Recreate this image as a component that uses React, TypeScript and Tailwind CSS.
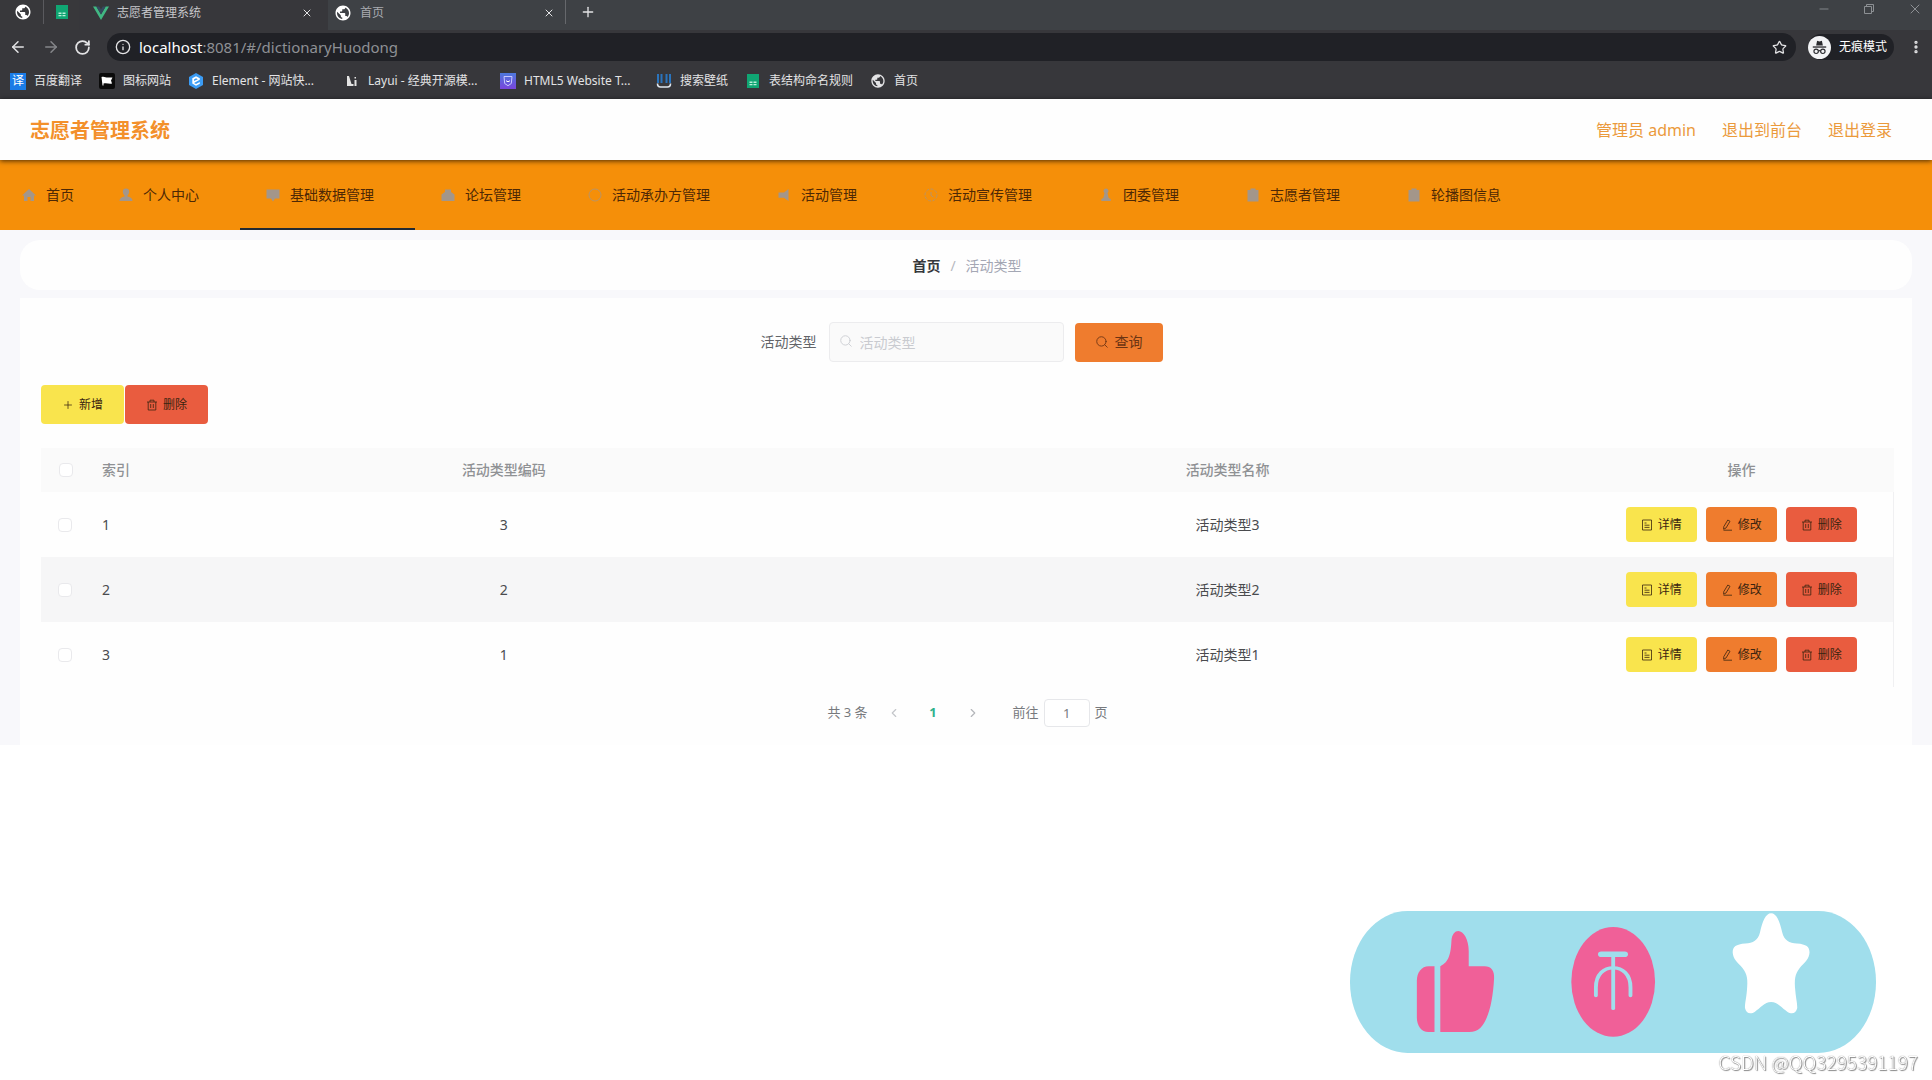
import React from "react";
import {
  ArrowLeft,
  ArrowRight,
  ChevronLeft,
  ChevronRight,
  Copy,
  Info,
  Minus,
  MoreVertical,
  Plus,
  RotateCw,
  Search,
  Star,
  X,
} from "lucide-react";
import { MdPublic } from "react-icons/md";

type Tone = "yellow" | "orange" | "red";

const toneClass: Record<Tone, string> = {
  yellow: "bg-[#f9e44d]",
  orange: "bg-[#ef7c2e]",
  red: "bg-[#e95c3f]",
};

/* ---------- small drawings ---------- */

function SheetIcon() {
  return (
    <svg className="size-4" viewBox="0 0 16 16" aria-hidden="true">
      <path d="M2 1h12v14H2z" fill="#10a673" />
      <path d="M4.5 8.5h3v1.5h-3zM8.5 8.5h3v1.5h-3zM4.5 11h3v1.2h-3zM8.5 11h3v1.2h-3z" fill="#b9efd9" />
    </svg>
  );
}

function VueIcon() {
  return (
    <svg className="size-4" viewBox="0 0 16 16" aria-hidden="true">
      <path d="M0 1.5h3.3L8 9.6l4.700-8.100H16L8 15z" fill="#41b883" />
      <path d="M3.300 1.500h2.900L8 4.600l1.800-3.100h2.900L8 9.600z" fill="#35495e" />
    </svg>
  );
}

function TranslateIcon() {
  return (
    <span className="flex size-[17px] items-center justify-center bg-[#1b7ce6] text-xs leading-none text-white" aria-hidden="true">
      译
    </span>
  );
}

function FlagIcon() {
  return (
    <svg className="size-4" viewBox="0 0 16 16" aria-hidden="true">
      <rect width="16" height="16" rx="2" fill="#0b0b0b" />
      <path d="M2.500 4c3-1 4.500 1 7 .5l4 0-1.500 3 1 3c-3 .8-5-1-8.500 0V12.500H3.500z" fill="#fff" />
    </svg>
  );
}

function ElementIcon() {
  return (
    <svg className="size-4" viewBox="0 0 16 16" aria-hidden="true">
      <path d="M8 0l7 4v8l-7 4-7-4V4z" fill="#3b9cf5" />
      <path d="M11.800 5.200L8 3.200 4.300 5.300v5.300L8 12.700l3.800-2v-1.800L8 11 6 9.900l5.800-3.200zM6 8.100V6.500L8 5.300l1.800 1z" fill="#fff" />
    </svg>
  );
}

function LayuiIcon() {
  return (
    <svg className="size-4" viewBox="0 0 16 16" fill="#e4e4e4" aria-hidden="true">
      <path d="M3 3h2l2.500 8h2v2H3zM10.500 7h2v6h-2zM10.500 4h1.500v1.500h-1.500z" />
    </svg>
  );
}

function HtmlIcon() {
  return (
    <svg className="size-4" viewBox="0 0 16 16" aria-hidden="true">
      <defs>
        <linearGradient id="html-badge" x1="0" y1="0" x2="0" y2="1">
          <stop offset="0" stopColor="#4d78dc" />
          <stop offset="1" stopColor="#7a45dd" />
        </linearGradient>
      </defs>
      <rect width="16" height="16" fill="url(#html-badge)" />
      <path d="M4 3.500h8l-.7 7L8 12.700l-3.300-2.200z" fill="none" stroke="#c9c9ff" />
      <path d="M6 7.500c1 1.500 3 1.500 4 0" fill="none" stroke="#fff" />
    </svg>
  );
}

function WallpaperIcon() {
  return (
    <svg className="size-4" viewBox="0 0 16 16" fill="none" aria-hidden="true">
      <path d="M2 1v9M5.500 1v9M10.500 1v9M14 1v9" stroke="#2a74bd" strokeWidth="2" />
      <path d="M1.500 10.500c0 2 1 3.500 3 3.500h7c2 0 3-1.500 3-3.500" stroke="#dfe7ef" strokeWidth="1.600" />
    </svg>
  );
}

function IncognitoIcon() {
  return (
    <svg className="size-[23px]" viewBox="0 0 24 24" fill="none" aria-hidden="true">
      <circle cx="12" cy="12" r="12" fill="#f2f3f5" />
      <path d="M8.500 10l1-5 2.500.8 2.500-.8 1 5z" fill="#2a2b2f" />
      <path d="M5 11.500h14" stroke="#2a2b2f" strokeWidth="1.400" />
      <circle cx="8.500" cy="16" r="2.300" stroke="#2a2b2f" strokeWidth="1.200" />
      <circle cx="15.500" cy="16" r="2.300" stroke="#2a2b2f" strokeWidth="1.200" />
      <path d="M10.800 15.600c.8-.4 1.600-.4 2.400 0" stroke="#2a2b2f" strokeWidth="1.200" />
    </svg>
  );
}

function RestoreIcon() {
  return (
    <svg className="size-3" viewBox="0 0 12 12" fill="none" stroke="currentColor" aria-hidden="true">
      <path d="M1.500 3.500h7v7h-7zM3.500 3.500v-2h7v7h-2" />
    </svg>
  );
}

function TrashIcon() {
  return (
    <svg className="size-3" viewBox="0 0 12 12" fill="none" stroke="currentColor" strokeWidth="0.800" aria-hidden="true">
      <path d="M1 3h10M4 3V1.200h4V3M2.200 3v8h7.600V3M4.700 5v4M7.300 5v4" />
    </svg>
  );
}

function DocIcon() {
  return (
    <svg className="size-3" viewBox="0 0 12 12" fill="none" stroke="currentColor" strokeWidth="0.800" aria-hidden="true">
      <path d="M1.500 1h9v10h-9zM3.500 4h2M3.500 6.200h5M3.500 8.400h5" />
    </svg>
  );
}

function EditIcon() {
  return (
    <svg className="size-3" viewBox="0 0 12 12" fill="none" stroke="currentColor" strokeWidth="0.800" aria-hidden="true">
      <path d="M6.800 1l2.200 1.300-4 6.700-2.400 1.200.2-2.600zM2.500 11.200h8.500" />
    </svg>
  );
}

const navShapes = {
  home: <path d="M8 2l7 6.500h-2V14H9.500v-4h-3v4H3V8.500H1z" />,
  user: <path d="M8 1.500a3.200 3.200 0 013.200 3.200c0 1.500-.7 2.900-1.700 3.700v1.200c3 .6 5 1.700 5 4.400h-13c0-2.700 2-3.800 5-4.400V8.400c-1-.8-1.700-2.200-1.700-3.700A3.200 3.200 0 018 1.500z" />,
  message: <path d="M1.500 2.500h13v9H10l-2 3-2-3H1.500z" />,
  shop: <path d="M5 2.500h6v2.500l3.500 2.500V14h-13V7.500L5 5z" />,
  ring: <circle cx="8" cy="8" r="6" fill="none" stroke="currentColor" strokeWidth="1" opacity="0.700" />,
  horn: <path d="M12.500 2v12L8 10.800H2.500V5.500H8z" />,
  clock: (
    <g fill="none" stroke="currentColor" strokeWidth="1" opacity="0.700">
      <circle cx="8" cy="8" r="6" strokeDasharray="3 1.500" />
      <path d="M8 5v3.500l2.500 1.500" />
    </g>
  ),
  pawn: <path d="M8 1.500a2.500 2.500 0 011.500 4.500l1.200 5 2 1v2H3.300v-2l2-1 1.200-5A2.500 2.500 0 018 1.500z" />,
  clip: <path d="M5.500 1.500h5v1.500h3v11.500h-11V3h3z" />,
};

type NavKey = keyof typeof navShapes;

function NavIcon({ name }: { name: NavKey }) {
  return (
    <svg className="size-4 shrink-0 text-[#a3968a]" viewBox="0 0 16 16" fill="currentColor" aria-hidden="true">
      {navShapes[name]}
    </svg>
  );
}

/* ---------- browser window ---------- */

const bookmarks: { label: string; icon: React.ReactNode; wide?: boolean }[] = [
  { label: "百度翻译", icon: <TranslateIcon /> },
  { label: "图标网站", icon: <FlagIcon /> },
  { label: "Element - 网站快...", icon: <ElementIcon />, wide: true },
  { label: "Layui - 经典开源模...", icon: <LayuiIcon />, wide: true },
  { label: "HTML5 Website T...", icon: <HtmlIcon />, wide: true },
  { label: "搜索壁纸", icon: <WallpaperIcon /> },
  { label: "表结构命名规则", icon: <SheetIcon /> },
  { label: "首页", icon: <MdPublic className="size-[18px]" /> },
];

function BrowserChrome() {
  return (
    <div className="bg-[#37373b] text-[#e3e3e5]">
      <div className="flex h-[30px] items-start bg-[#3e4145] text-xs">
        <div className="flex h-full items-start bg-[#38383b]">
          <button aria-label="固定的标签页" className="flex h-6 w-[43px] items-center justify-center pl-[2px]">
            <MdPublic className="size-[18px] text-white" />
          </button>
          <span className="h-6 w-px bg-[#5a5a5e]" />
          <button aria-label="表格" className="flex h-6 w-[35px] items-center justify-center">
            <SheetIcon />
          </button>
        </div>
        <div className="flex h-full w-[249px] items-start bg-[#37373b] pl-[14px] pr-[15px]">
          <div className="flex h-[26px] flex-1 items-center gap-2">
            <VueIcon />
            <span className="flex-1 text-[#c6c6ca]">志愿者管理系统</span>
            <button aria-label="关闭标签页">
              <X className="size-3" />
            </button>
          </div>
        </div>
        <div className="flex h-[26px] w-[237px] items-center gap-2 pl-[6px] pr-[10px]">
          <MdPublic className="size-[18px] text-white" />
          <span className="flex-1 text-[#a9abb0]">首页</span>
          <button aria-label="关闭标签页">
            <X className="size-3" />
          </button>
        </div>
        <span className="h-6 w-px bg-[#66686c]" />
        <button aria-label="新建标签页" className="flex h-6 w-[43px] items-center justify-center">
          <Plus className="size-4" />
        </button>
        <div className="ml-auto flex h-[18px] items-center gap-8 pr-[9px] text-[#8d9094]">
          <button aria-label="最小化"><Minus className="size-[14px]" strokeWidth={1.5} /></button>
          <button aria-label="还原"><RestoreIcon /></button>
          <button aria-label="关闭"><X className="size-4" strokeWidth={1.5} /></button>
        </div>
      </div>

      <div className="flex h-[34px] items-center pl-[9px] pr-2">
        <button aria-label="后退"><ArrowLeft className="size-[18px]" /></button>
        <button aria-label="前进" className="ml-[15px] text-[#85868a]"><ArrowRight className="size-[18px]" /></button>
        <button aria-label="刷新" className="ml-[14px]"><RotateCw className="size-[17px]" strokeWidth={2.5} /></button>
        <div className="ml-4 flex h-7 flex-1 items-center gap-2 rounded-full bg-[#202126] pl-2 pr-[9px]">
          <Info className="size-4" />
          <span className="flex-1 text-[15px] text-[#8e9095]">
            <span className="text-white">localhost</span>:8081/#/dictionaryHuodong
          </span>
          <button aria-label="收藏"><Star className="size-[15px]" /></button>
        </div>
        <div className="ml-3 flex h-[26px] items-center gap-2 rounded-full bg-[#202126] pr-[7px] text-xs text-white">
          <IncognitoIcon />
          <span>无痕模式</span>
        </div>
        <button aria-label="更多" className="ml-[14px]"><MoreVertical className="size-4" strokeWidth={3} /></button>
      </div>

      <nav aria-label="书签" className="flex h-[35px] items-center gap-[17px] pb-px pl-[10px] text-xs">
        {bookmarks.map((b) => (
          <a key={b.label} href="#" className="flex items-center gap-2">
            <span className="flex size-4 items-center justify-center">{b.icon}</span>
            <span className={b.wide ? "w-[115px] truncate" : "whitespace-nowrap"}>{b.label}</span>
          </a>
        ))}
      </nav>
    </div>
  );
}

/* ---------- page ---------- */

const menu: { label: string; icon: NavKey }[] = [
  { label: "个人中心", icon: "user" },
  { label: "基础数据管理", icon: "message" },
  { label: "论坛管理", icon: "shop" },
  { label: "活动承办方管理", icon: "ring" },
  { label: "活动管理", icon: "horn" },
  { label: "活动宣传管理", icon: "clock" },
  { label: "团委管理", icon: "pawn" },
  { label: "志愿者管理", icon: "clip" },
  { label: "轮播图信息", icon: "clip" },
];

const rows = [
  { index: 1, code: 3, name: "活动类型3" },
  { index: 2, code: 2, name: "活动类型2" },
  { index: 3, code: 1, name: "活动类型1" },
];

function RowButton({ tone, icon, children }: { tone: Tone; icon: React.ReactNode; children: React.ReactNode }) {
  return (
    <button className={`flex h-[35px] items-center gap-[5px] rounded px-[15px] text-xs text-[#3a2410] ${toneClass[tone]}`}>
      {icon}
      <span>{children}</span>
    </button>
  );
}

function Tick({ label }: { label: string }) {
  return (
    <input
      type="checkbox"
      aria-label={label}
      className="block size-[14px] appearance-none rounded-sm border border-[#e9e9ec] bg-white"
    />
  );
}

function TypeTable() {
  return (
    <table className="mt-6 w-full table-fixed border-collapse text-sm">
      <colgroup>
        <col className="w-[51px]" />
        <col className="w-[50px]" />
        <col />
        <col />
        <col className="w-[304px]" />
      </colgroup>
      <thead>
        <tr className="h-11 bg-[#fafafa] text-[#8f9194]">
          <th className="pl-[18px]"><Tick label="全选" /></th>
          <th className="pl-[10px] text-left font-medium">索引</th>
          <th className="font-medium">活动类型编码</th>
          <th className="font-medium">活动类型名称</th>
          <th className="font-medium">操作</th>
        </tr>
      </thead>
      <tbody>
        {rows.map((r) => (
          <tr key={r.index} className="h-[65px] border-r border-[#f0f0f2] text-[#4a4b4e] even:bg-[#f6f6f7]">
            <td className="pl-[17px]"><Tick label={`选择第${r.index}行`} /></td>
            <td className="pl-[10px]">{r.index}</td>
            <td className="text-center">{r.code}</td>
            <td className="text-center">{r.name}</td>
            <td>
              <div className="flex justify-center gap-[9px]">
                <RowButton tone="yellow" icon={<DocIcon />}>详情</RowButton>
                <RowButton tone="orange" icon={<EditIcon />}>修改</RowButton>
                <RowButton tone="red" icon={<TrashIcon />}>删除</RowButton>
              </div>
            </td>
          </tr>
        ))}
      </tbody>
    </table>
  );
}

function Pagination() {
  return (
    <div className="mt-3 flex h-7 items-center justify-center text-[13px] text-[#77797d]">
      <span className="mr-[6px]">共 3 条</span>
      <button aria-label="上一页" className="flex w-10 justify-center text-[#c4c6ca]">
        <ChevronLeft className="size-[14px]" />
      </button>
      <button className="w-[39px] font-bold text-[#2fb18c]">1</button>
      <button aria-label="下一页" className="flex w-10 justify-center text-[#b4b6ba]">
        <ChevronRight className="size-[14px]" />
      </button>
      <label className="ml-5 flex items-center">
        前往
        <input
          defaultValue="1"
          className="mx-[5px] h-7 w-[46px] rounded-sm border border-[#e6e7ea] bg-white text-center"
        />
        页
      </label>
    </div>
  );
}

function ReactionBar() {
  return (
    <svg
      className="fixed bottom-[27px] right-14 h-[142px] w-[526px]"
      viewBox="52 60 1369 427"
      preserveAspectRatio="none"
      aria-hidden="true"
    >
      <rect x="52" y="60" width="1369" height="427" rx="150" ry="213" fill="#a0deec" />
      <g fill="#f06098">
        <path d="M272 226H257C238 226 226 245 226 270V380C226 405 238 424 256 424H272Z" />
        <path d="M287 226C305 215 314 200 316 150C317 130 325 120 334 120C347 120 361 145 361 180V226H402C420 226 428 240 427 262C425 310 418 355 408 380C399 405 387 424 362 424H287Z" />
        <ellipse cx="737" cy="273" rx="109" ry="165" />
      </g>
      <g fill="none" stroke="#a0deec" strokeLinecap="round">
        <path d="M706 190H767" strokeWidth="17" />
        <path d="M737 190V353" strokeWidth="10" />
        <path d="M692 314V290C692 250 713 231 737 231S782 250 782 290V314" strokeWidth="10" />
      </g>
      <path
        d="M1148 67C1162 67 1170 90 1177 125C1182 148 1195 158 1215 158C1240 160 1248 168 1248 185C1247 205 1235 215 1222 232C1210 250 1208 265 1211 300C1213 325 1216 335 1216 352C1213 368 1202 372 1190 363C1178 354 1165 334 1148 334C1131 334 1118 354 1106 363C1094 372 1083 368 1080 352C1080 335 1083 325 1085 300C1088 265 1086 250 1074 232C1061 215 1049 205 1048 185C1048 168 1056 160 1081 158C1101 158 1114 148 1119 125C1126 90 1134 67 1148 67Z"
        fill="#fff"
      />
    </svg>
  );
}

export default function App() {
  return (
    <div className="min-h-screen bg-white font-['Noto_Sans','Noto_Sans_CJK_SC',sans-serif]">
      <BrowserChrome />

      <header className="relative flex h-[61px] items-center justify-between bg-[#fefefe] pl-[30px] pr-10 shadow-[0_1px_5px_rgba(0,0,0,0.7)]">
        <h1 className="pt-[2px] text-xl font-bold text-[#f3902b]">志愿者管理系统</h1>
        <div className="flex gap-[26px] text-base text-[#eb9a3c]">
          <span>管理员 admin</span>
          <a href="#">退出到前台</a>
          <a href="#">退出登录</a>
        </div>
      </header>

      <nav aria-label="主菜单" className="flex h-[70px] whitespace-nowrap bg-[#f58f09] text-sm text-[#4d2805]">
        <a href="#" className="flex items-center gap-[9px] pl-[21px] pr-[19px]">
          <NavIcon name="home" />
          首页
        </a>
        {menu.map((m) => (
          <a
            key={m.label}
            href="#"
            className={`flex items-center gap-[9px] pl-[25px] pr-[41px] ${
              m.label === "基础数据管理" ? "shadow-[inset_0_-2px_0_#222a33]" : ""
            }`}
          >
            <NavIcon name={m.icon} />
            {m.label}
          </a>
        ))}
      </nav>

      <main className="bg-[#f8f8fb] px-5 pt-[10px]">
        <nav aria-label="面包屑" className="flex h-[50px] items-center justify-center gap-[10px] rounded-[20px] bg-[#fefefe] pl-[2px] pt-px text-sm">
          <a href="#" className="font-bold text-[#36383c]">首页</a>
          <span className="text-[#b5b8c0]">/</span>
          <span className="text-[#a4a7b4]">活动类型</span>
        </nav>

        <section className="mt-2 bg-[#fefefe] pb-[18px] pl-[21px] pr-[18px] pt-6">
          <form className="flex items-center justify-center pr-3" onSubmit={(e) => e.preventDefault()}>
            <label htmlFor="type-name" className="mr-3 text-sm text-[#626468]">活动类型</label>
            <div className="relative mr-[11px]">
              <Search className="absolute left-[10px] top-3 size-[14px] text-[#c9cbd0]" strokeWidth={1.5} />
              <input
                id="type-name"
                placeholder="活动类型"
                className="block h-10 w-[235px] rounded border border-[#ececee] bg-[#fafafa] pl-[30px] text-sm placeholder:text-[#c9cbd0]"
              />
            </div>
            <button className="flex h-[39px] items-center gap-[6px] rounded bg-[#ef7c2e] px-5 text-sm text-[#6b3413]">
              <Search className="size-[14px]" strokeWidth={1.5} />
              查询
            </button>
          </form>

          <div className="mt-[23px] flex gap-px text-xs text-[#3a2410]">
            <button className="flex h-[39px] items-center gap-[5px] rounded bg-[#f9e44d] px-[21px]">
              <Plus className="size-3" strokeWidth={1.5} />
              新增
            </button>
            <button className="flex h-[39px] items-center gap-[5px] rounded bg-[#e95c3f] px-[21px]">
              <TrashIcon />
              删除
            </button>
          </div>

          <TypeTable />
          <Pagination />
        </section>
      </main>

      <ReactionBar />
      <p className="fixed bottom-1 right-[14px] font-['Noto_Sans_CJK_SC',sans-serif] text-[19px] leading-7 font-light text-white [text-shadow:0_0_1px_#666,1px_1px_1px_#888]">
        CSDN @QQ3295391197
      </p>
    </div>
  );
}
